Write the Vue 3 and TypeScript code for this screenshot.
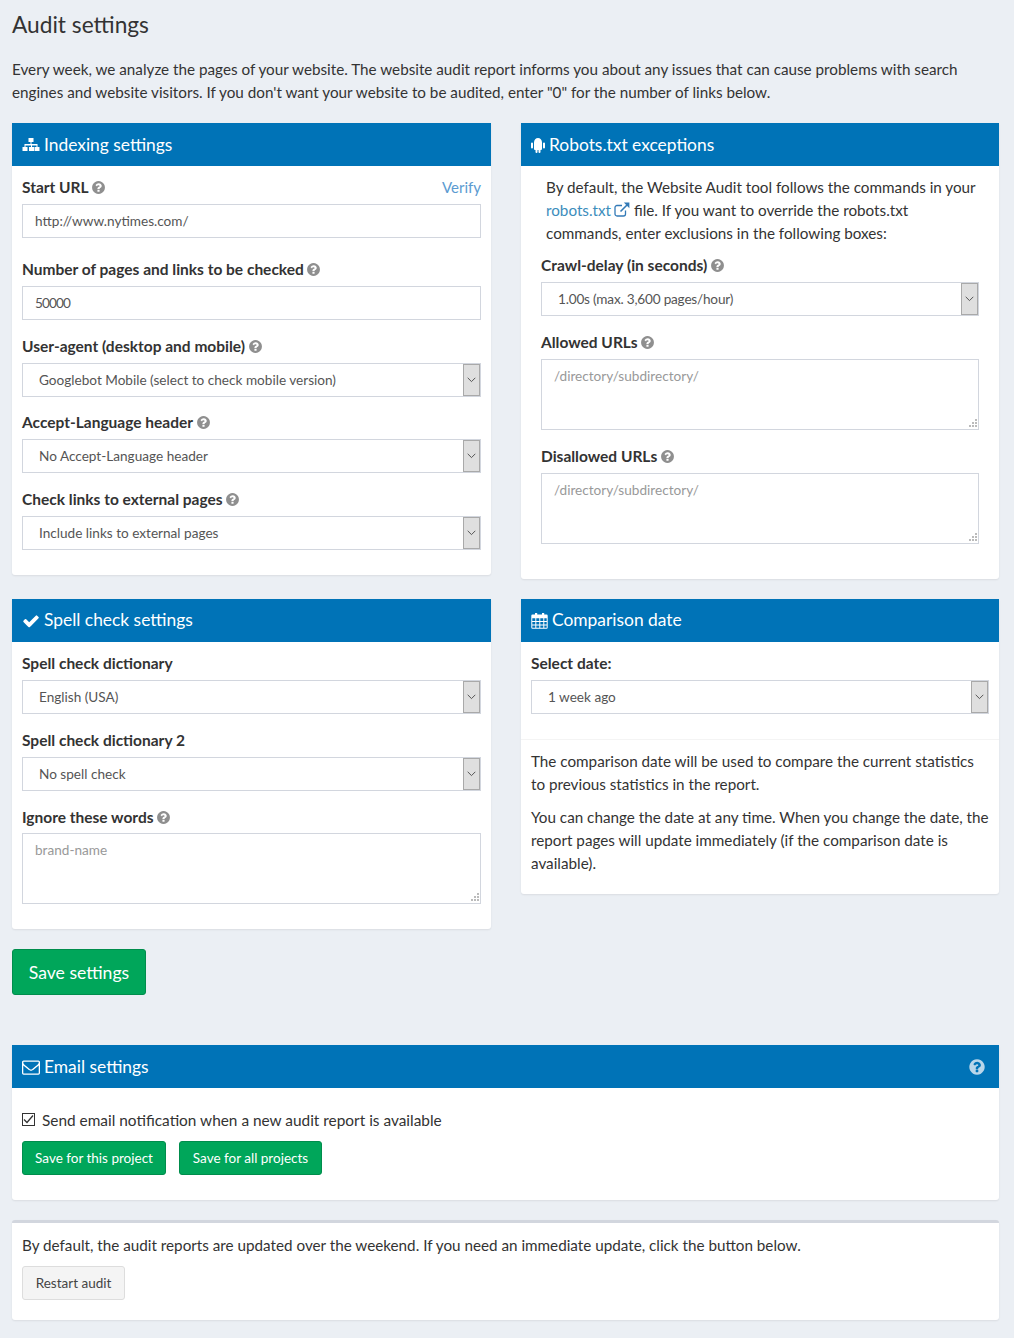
<script setup lang="ts">
const q = "M1024 1376v-192q0-14-9-23t-23-9h-192q-14 0-23 9t-9 23v192q0 14 9 23t23 9h192q14 0 23-9t9-23zm256-672q0-88-55.5-163t-138.5-116-170-41q-243 0-371 213-15 24 8 42l132 100q7 6 19 6 16 0 25-12 53-68 86-92 34-24 86-24 48 0 85.5 26t37.5 59q0 38-20 61t-68 45q-63 28-115.5 86.5t-52.5 125.5v36q0 14 9 23t23 9h192q14 0 23-9t9-23q0-19 21.5-49.5t54.5-49.5q32-18 49-28.5t46-35 44.5-48 28-60.5 12.5-81zm384 192q0 209-103 385.5t-279.5 279.5-385.5 103-385.5-103-279.5-279.5-103-385.5 103-385.5 279.5-279.5 385.5-103 385.5 103 279.5 279.5 103 385.5z";
const check = "M1671 566q0 40-28 68l-724 724-136 136q-28 28-68 28t-68-28l-136-136-362-362q-28-28-28-68t28-68l136-136q28-28 68-28t68 28l294 295 656-657q28-28 68-28t68 28l136 136q28 28 28 68z";
const env = "M1664 1504v-768q-32 36-69 66-268 206-426 338-51 43-83 67t-86.5 48.5-102.5 24.5h-2q-48 0-102.5-24.5t-86.5-48.5-83-67q-158-132-426-338-37-30-69-66v768q0 13 9.5 22.5t22.5 9.5h1472q13 0 22.5-9.5t9.5-22.5zm0-1051v-24.5l-.5-13-3-12.5-5.5-9-9-7.5-14-2.5h-1472q-13 0-22.5 9.5t-9.5 22.5q0 168 147 284 193 152 401 317 6 5 35 29.5t46 37.5 44.5 31.5 50.5 27.5 43 9h2q20 0 43-9t50.5-27.5 44.5-31.5 46-37.5 35-29.5q208-165 401-317 54-43 100.5-115.5t46.5-131.5zm128-37v1088q0 66-47 113t-113 47h-1472q-66 0-113-47t-47-113v-1088q0-66 47-113t113-47h1472q66 0 113 47t47 113z";
</script>

<template>
  <div class="page">
    <h1>Audit settings</h1>
    <p class="intro">Every week, we analyze the pages of your website. The website audit report informs you about any issues that can cause problems with search engines and website visitors. If you don't want your website to be audited, enter "0" for the number of links below.</p>

    <div class="grid">
      <section class="card">
        <header class="head">
          <svg class="hi" width="18" height="16" viewBox="0 0 18 16"><path fill="#fff" d="M6.500 1h5v4h-2v2h6v3h2v4h-5v-4h2V8.500h-4.500V10h2v4h-5v-4h2V8.500H3.500V10h2v4h-5v-4h2V7h6V5h-2z"/></svg>
          <span>Indexing settings</span>
        </header>
        <div class="body left">
          <div class="lab lab-between">
            <label>Start URL <svg class="q" viewBox="0 0 1792 1792"><path :d="q"/></svg></label>
            <a class="verify">Verify</a>
          </div>
          <input class="field" value="http://www.nytimes.com/" />
          <div class="lab gap1"><label>Number of pages and links to be checked <svg class="q" viewBox="0 0 1792 1792"><path :d="q"/></svg></label></div>
          <input class="field num" value="50000" />
          <div class="lab gap2"><label>User-agent (desktop and mobile) <svg class="q" viewBox="0 0 1792 1792"><path :d="q"/></svg></label></div>
          <div class="sel"><span>Googlebot Mobile (select to check mobile version)</span><i class="arrow"><svg width="9" height="6" viewBox="0 0 9 6"><path d="M.7.8 4.500 4.600 8.300.8" fill="none" stroke="#555" stroke-width="1"/></svg></i></div>
          <div class="lab gap3 tight"><label>Accept-Language header <svg class="q" viewBox="0 0 1792 1792"><path :d="q"/></svg></label></div>
          <div class="sel"><span>No Accept-Language header</span><i class="arrow"><svg width="9" height="6" viewBox="0 0 9 6"><path d="M.7.8 4.500 4.600 8.300.8" fill="none" stroke="#555" stroke-width="1"/></svg></i></div>
          <div class="lab gap4 tight"><label>Check links to external pages <svg class="q" viewBox="0 0 1792 1792"><path :d="q"/></svg></label></div>
          <div class="sel"><span>Include links to external pages</span><i class="arrow"><svg width="9" height="6" viewBox="0 0 9 6"><path d="M.7.8 4.500 4.600 8.300.8" fill="none" stroke="#555" stroke-width="1"/></svg></i></div>
        </div>
      </section>

      <section class="card">
        <header class="head">
          <svg class="hi" width="14" height="16" viewBox="0 0 14 16"><path fill="#fff" d="M3 5.500a4 4.500 0 0 1 8 0V12a1 1 0 0 1-1 1H9.500v2a1 1 0 0 1-2 0v-2h-1v2a1 1 0 0 1-2 0v-2H4a1 1 0 0 1-1-1zM1 5.500a1 1 0 0 1 1 1V10.500a1 1 0 0 1-2 0V6.500a1 1 0 0 1 1-1zM13 5.500a1 1 0 0 1 1 1V10.500a1 1 0 0 1-2 0V6.500a1 1 0 0 1 1-1z"/></svg>
          <span>Robots.txt exceptions</span>
        </header>
        <div class="body right">
          <p class="robots">By default, the Website Audit tool follows the commands in your <a>robots.txt</a><svg class="ext" width="16" height="15" viewBox="0 0 16 15"><path d="M11.500 8.500v3.500a2 2 0 0 1-2 2H3a2 2 0 0 1-2-2V5.500a2 2 0 0 1 2-2h5" fill="none" stroke="#337ab7" stroke-width="1.300"/><path d="M6.500 9.500 13 3" fill="none" stroke="#337ab7" stroke-width="1.600"/><path d="M9.800.6h5.600v5.600z" fill="#337ab7"/></svg> file. If you want to override the robots.txt commands, enter exclusions in the following boxes:</p>
          <div class="lab r1 tight"><label>Crawl-delay (in seconds) <svg class="q" viewBox="0 0 1792 1792"><path :d="q"/></svg></label></div>
          <div class="sel narrow"><span>1.00s (max. 3,600 pages/hour)</span><i class="arrow"><svg width="9" height="6" viewBox="0 0 9 6"><path d="M.7.8 4.500 4.600 8.300.8" fill="none" stroke="#555" stroke-width="1"/></svg></i></div>
          <div class="lab r2 tight"><label>Allowed URLs <svg class="q" viewBox="0 0 1792 1792"><path :d="q"/></svg></label></div>
          <div class="ta"><textarea placeholder="/directory/subdirectory/"></textarea><svg class="grip" width="9" height="9" viewBox="0 0 9 9"><path fill="#bbb" d="M7 0h2v2H7zM4 3h2v2H4zM7 3h2v2H7zM1 6h2v2H1zM4 6h2v2H4zM7 6h2v2H7z"/></svg></div>
          <div class="lab r3 tight"><label>Disallowed URLs <svg class="q" viewBox="0 0 1792 1792"><path :d="q"/></svg></label></div>
          <div class="ta"><textarea placeholder="/directory/subdirectory/"></textarea><svg class="grip" width="9" height="9" viewBox="0 0 9 9"><path fill="#bbb" d="M7 0h2v2H7zM4 3h2v2H4zM7 3h2v2H7zM1 6h2v2H1zM4 6h2v2H4zM7 6h2v2H7z"/></svg></div>
        </div>
      </section>

      <section class="card">
        <header class="head up">
          <svg class="hi" width="18" height="18" viewBox="0 0 1792 1792"><path fill="#fff" :d="check"/></svg>
          <span>Spell check settings</span>
        </header>
        <div class="body spell">
          <div class="lab"><label>Spell check dictionary</label></div>
          <div class="sel"><span>English (USA)</span><i class="arrow"><svg width="9" height="6" viewBox="0 0 9 6"><path d="M.7.8 4.500 4.600 8.300.8" fill="none" stroke="#555" stroke-width="1"/></svg></i></div>
          <div class="lab gap2"><label>Spell check dictionary 2</label></div>
          <div class="sel"><span>No spell check</span><i class="arrow"><svg width="9" height="6" viewBox="0 0 9 6"><path d="M.7.8 4.500 4.600 8.300.8" fill="none" stroke="#555" stroke-width="1"/></svg></i></div>
          <div class="lab gap2"><label>Ignore these words <svg class="q" viewBox="0 0 1792 1792"><path :d="q"/></svg></label></div>
          <div class="ta pull"><textarea placeholder="brand-name"></textarea><svg class="grip" width="9" height="9" viewBox="0 0 9 9"><path fill="#bbb" d="M7 0h2v2H7zM4 3h2v2H4zM7 3h2v2H7zM1 6h2v2H1zM4 6h2v2H4zM7 6h2v2H7z"/></svg></div>
        </div>
      </section>

      <section class="card">
        <header class="head up">
          <svg class="hi" width="17" height="17" viewBox="0 0 17 17"><path fill="#fff" fill-rule="evenodd" d="M1.500 2.500H4V1h2.200v1.500h4.800V1h2.200v1.500h2.300a1.200 1.200 0 0 1 1.200 1.200V15.500a1.200 1.200 0 0 1-1.200 1.200H1.500a1.200 1.200 0 0 1-1.200-1.200V3.700a1.200 1.200 0 0 1 1.200-1.200zM1.300 6.200v2.700h3V6.200zM5.300 6.200v2.700h3V6.200zM9.300 6.200v2.700h3V6.200zM13.300 6.200v2.700h2.400V6.200zM1.300 9.900v2.500h3V9.900zM5.300 9.900v2.500h3V9.900zM9.300 9.900v2.500h3V9.900zM13.300 9.900v2.500h2.400V9.900zM1.300 13.400v2.300h3v-2.300zM5.300 13.400v2.300h3v-2.300zM9.300 13.400v2.300h3v-2.300zM13.300 13.400v2.300h2.400v-2.300z"/></svg>
          <span>Comparison date</span>
        </header>
        <div class="body compare">
          <div class="lab"><label>Select date:</label></div>
          <div class="sel"><span>1 week ago</span><i class="arrow"><svg width="9" height="6" viewBox="0 0 9 6"><path d="M.7.8 4.500 4.600 8.300.8" fill="none" stroke="#555" stroke-width="1"/></svg></i></div>
        </div>
        <div class="body note">
          <p class="first">The comparison date will be used to compare the current statistics to previous statistics in the report.</p>
          <p>You can change the date at any time. When you change the date, the report pages will update immediately (if the comparison date is available).</p>
        </div>
      </section>
    </div>

    <button class="btn big">Save settings</button>

    <section class="card email">
      <header class="head between">
        <div class="hl">
          <svg class="hi" width="18" height="18" viewBox="0 0 1792 1792"><path fill="#fff" :d="env"/></svg>
          <span>Email settings</span>
        </div>
        <svg class="help" width="18" height="18" viewBox="0 0 1792 1792"><path fill="#b9d6ea" :d="q"/></svg>
      </header>
      <div class="body mail">
        <label class="chk">
          <span class="box"><svg width="11" height="10" viewBox="0 0 11 10"><path d="M1 5.500 4 8.500 10 1.500" fill="none" stroke="#333" stroke-width="1.300"/></svg></span>
          Send email notification when a new audit report is available
        </label>
        <div class="btns">
          <button class="btn small">Save for this project</button>
          <button class="btn small">Save for all projects</button>
        </div>
      </div>
    </section>

    <section class="card restart">
      <p>By default, the audit reports are updated over the weekend. If you need an immediate update, click the button below.</p>
      <button class="btn grey">Restart audit</button>
    </section>
  </div>
</template>

<style>
html, body { margin: 0; background: #ebeff4; }
</style>

<style scoped>
.page {
  box-sizing: border-box;
  width: 1014px;
  height: 1338px;
  padding: 0 15px 0 12px;
  background: #ebeff4;
  font-family: "Lato", "Noto Sans", sans-serif;
  font-size: 15.24px;
  color: #333;
  line-height: 23px;
  overflow: hidden;
}
h1 { margin: 0; padding-top: 10px; font-size: 22.7px; font-weight: 400; line-height: 29px; }
.intro { margin: 19px 0 19px; height: 46px; }
.grid { display: grid; grid-template-columns: 479px 478px; column-gap: 30px; row-gap: 20px; align-items: start; }
.card { background: #fff; border-radius: 0 0 3px 3px; box-shadow: 0 1px 2px rgba(0,0,0,.08); }
.head { height: 43px; background: #0073b7; color: #fff; font-size: 17.4px; display: flex; align-items: center; padding-left: 10px; gap: 4px; }
.up span { margin-top: -2px; }
.hl { display: flex; align-items: center; gap: 4px; }
.between { justify-content: space-between; padding-right: 13px; }
.hi { flex: none; }
.body { padding: 10px; }
.left { height: 409px; box-sizing: border-box; }
.right { height: 413px; box-sizing: border-box; padding: 10px 20px; }
.spell { height: 287px; box-sizing: border-box; }
.lab { height: 23px; line-height: 21px; margin-bottom: 5px; font-weight: 700; font-size: 15.5px; display: flex; }
.tight { margin-bottom: 5px; }
.lab-between { justify-content: space-between; }
.verify { color: #5b9bd1; font-weight: 400; font-size: 15px; line-height: 22px; }
label { display: inline-flex; align-items: center; gap: 2.500px; }
.q { width: 15px; height: 15px; fill: #8f8f8f; }
.gap1 { margin-top: 20px; }
.gap2 { margin-top: 15px; }
.gap3 { margin-top: 14px; }
.gap4 { margin-top: 15px; }
.r1 { margin-top: 9px; }
.r2 { margin-top: 15px; }
.r3 { margin-top: 15px; }
.pull { margin-top: -1px; }
.field, .sel { box-sizing: border-box; width: 100%; height: 34px; border: 1px solid #d2d6de; background: #fff; font: inherit; font-size: 13.6px; color: #555; display: block; }
.field { padding: 0 12px; outline: none; }
.num { letter-spacing: -.9px; }
.sel { display: flex; align-items: center; padding-left: 16px; }
.sel span { flex: 1; }
.narrow span { letter-spacing: -.2px; }
.arrow { width: 17px; height: 32px; box-sizing: border-box; background: #dfdfdf; border: 1px solid #a9a9a9; display: flex; align-items: center; justify-content: center; }
.robots { margin: 0 0 0 5px; }
.robots a { color: #3c8dbc; }
.ext { margin: 0 0 -1px 3px; }
.ta { position: relative; height: 71px; }
.ta textarea { box-sizing: border-box; display: block; width: 100%; height: 100%; border: 1px solid #d2d6de; padding: 5px 12px; font: inherit; font-size: 13.6px; resize: none; outline: none; }
.ta textarea::placeholder { color: #999; opacity: 1; }
.grip { position: absolute; right: 2px; bottom: 2px; }
.compare { height: 98px; box-sizing: border-box; border-bottom: 1px solid #f4f4f4; }
.compare .sel { width: 458px; }
.note { height: 154px; box-sizing: border-box; padding-right: 7px; }
.note p { margin: 0 0 10px; }
.note .first { padding-right: 10px; }
.btn { font: inherit; border: 1px solid #008d4c; background: #00a65a; color: #fff; border-radius: 3px; cursor: pointer; padding: 0; }
.big { display: block; width: 134px; height: 46px; margin-top: 20px; font-size: 17.6px; }
.email { margin-top: 50px; height: 155px; }
.mail { padding-top: 21px; }
.chk { display: flex; align-items: center; gap: 7px; height: 23px; font-size: 15.4px; }
.box { box-sizing: border-box; width: 13px; height: 13px; border: 1px solid #333; display: flex; align-items: center; justify-content: center; margin-top: -3px; }
.btns { display: flex; gap: 13px; margin-top: 9px; }
.small { height: 34px; font-size: 13.500px; width: 144px; }
.small + .small { width: 143px; }
.restart { margin-top: 20px; height: 100px; box-sizing: border-box; border-top: 3px solid #d2d6de; padding: 11px 10px; border-radius: 3px; }
.restart p { margin: 0 0 9px; }
.grey { width: 103px; height: 34px; background: #f4f4f4; color: #444; border-color: #ddd; font-size: 13.500px; }
</style>
